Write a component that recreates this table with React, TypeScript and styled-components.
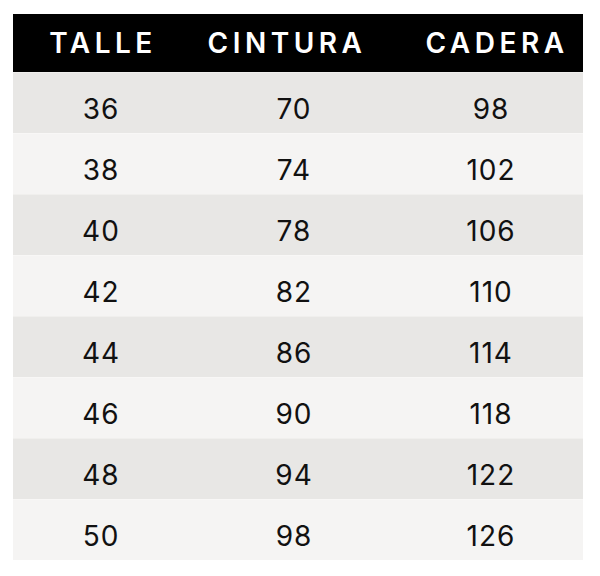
import React from "react";
import styled, { createGlobalStyle } from "styled-components";

const GlobalStyle = createGlobalStyle`
  html, body {
    margin: 0;
    padding: 0;
    background: #ffffff;
  }
  body {
    font-family: "Inter", "DejaVu Sans", sans-serif;
  }
`;

const sizes: [string, string, string][] = [
  ["36", "70", "98"],
  ["38", "74", "102"],
  ["40", "78", "106"],
  ["42", "82", "110"],
  ["44", "86", "114"],
  ["46", "90", "118"],
  ["48", "94", "122"],
  ["50", "98", "126"],
];

const headers = [
  { label: "TALLE", shift: 2 },
  { label: "CINTURA", shift: -7 },
  { label: "CADERA", shift: 6 },
];

export default function App() {
  return (
    <>
      <GlobalStyle />
      <Page>
        <Table>
          <HeaderRow>
            {headers.map((h) => (
              <HeaderCell key={h.label} $shift={h.shift}>
                {h.label}
              </HeaderCell>
            ))}
          </HeaderRow>
          {sizes.map((row, i) => (
            <Row key={row[0]} $striped={i % 2 === 0}>
              {row.map((value, j) => (
                <Cell key={j}>{value}</Cell>
              ))}
            </Row>
          ))}
        </Table>
      </Page>
    </>
  );
}

const Page = styled.div`
  padding: 14px 0 0 13px;
`;

const Table = styled.div`
  width: 570px;
  display: flex;
  flex-direction: column;
`;

const columns = "176px 210px 184px";

const HeaderRow = styled.div`
  display: grid;
  grid-template-columns: ${columns};
  height: 58px;
  align-items: center;
  background: #000000;
`;

const HeaderCell = styled.div<{ $shift: number }>`
  text-align: center;
  color: #ffffff;
  font-size: 28px;
  font-weight: 600;
  letter-spacing: 4.5px;
  padding-left: ${(p) => (p.$shift > 0 ? p.$shift * 2 : 0)}px;
  padding-right: ${(p) => (p.$shift < 0 ? -p.$shift * 2 : 0)}px;
`;

const Row = styled.div<{ $striped: boolean }>`
  display: grid;
  grid-template-columns: ${columns};
  height: 61px;
  box-sizing: border-box;
  align-items: center;
  padding-top: 11px;
  background: ${(p) => (p.$striped ? "#e8e7e5" : "#f5f4f3")};
  border-top: 1px solid ${(p) => (p.$striped ? "#f0efed" : "#f8f7f6")};
`;

const Cell = styled.div`
  text-align: center;
  color: #111111;
  font-size: 28px;
  font-weight: 400;
  letter-spacing: 1px;
`;
